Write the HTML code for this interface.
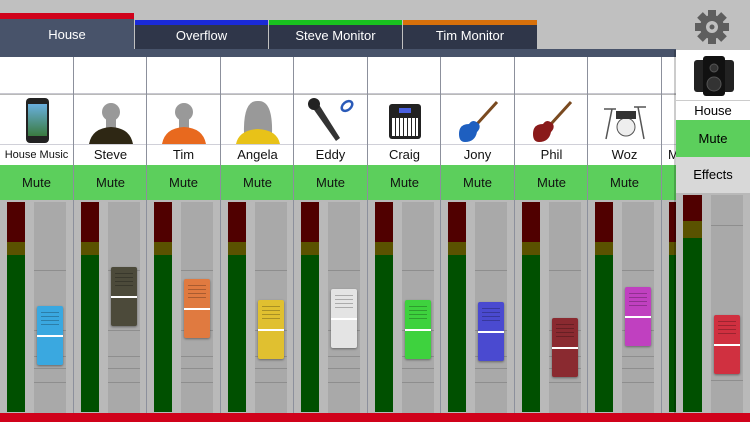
<!DOCTYPE html>
<html><head><meta charset="utf-8"><style>
*{margin:0;padding:0;box-sizing:border-box}
body{width:750px;height:422px;overflow:hidden;background:#c0c0c0;font-family:"Liberation Sans",sans-serif;position:relative}
.a{position:absolute}
.tab{position:absolute;top:20px;height:29px;color:#fff;font-size:13px;text-align:center;line-height:29px;background:#2f3649}
.ch{position:absolute;top:57px;width:74px;height:356px;border-right:1px solid #8c909c;background:#b9b9b9;overflow:hidden}
.w73{width:73px}
.r1{position:absolute;left:0;top:0;width:73px;height:37px;background:#fff;border-bottom:1px solid #c8c8d0}
.r2{position:absolute;left:0;top:38px;width:73px;height:50px;background:#fff;border-bottom:1px solid #d0d0d8}
.nm{position:absolute;left:0;top:88px;width:73px;height:20px;background:#fff;font-size:13px;text-align:center;line-height:20px;color:#111}
.mu{position:absolute;left:0;top:108px;width:73px;height:35px;background:#5ccf5c;font-size:13px;text-align:center;line-height:35px;color:#111}
.m1{position:absolute;left:7px;top:145px;width:18px;height:40px;background:#500000}
.m2{position:absolute;left:7px;top:185px;width:18px;height:13px;background:#5a5200}
.m3{position:absolute;left:7px;top:198px;width:18px;height:157px;background:#005000}
.gr{position:absolute;left:34px;top:145px;width:32px;height:211px;background:#a9a9a9}
.ln{position:absolute;left:34px;width:32px;height:1px;background:#8e8e8e}
.cap{position:absolute;left:37px;width:26px;height:59px;border-radius:2px;box-shadow:0 1px 2px rgba(0,0,0,.4)}
.cap:before{content:"";position:absolute;left:4px;right:4px;top:6px;height:14px;background:repeating-linear-gradient(rgba(0,0,0,.25) 0 1px,transparent 1px 4px)}
.cap:after{content:"";position:absolute;left:0;right:0;top:29px;height:2px;background:#fff}
</style></head><body>
<div class="a" style="left:0;top:13px;width:134px;height:7px;background:#d0021b"></div>
<div class="a" style="left:135px;top:20px;width:133px;height:5px;background:#1a2ad8"></div>
<div class="a" style="left:269px;top:20px;width:133px;height:5px;background:#19c21f"></div>
<div class="a" style="left:403px;top:20px;width:134px;height:5px;background:#d8700a"></div>
<div class="tab" style="left:0;top:19px;width:134px;height:31px;line-height:31px;background:#48536a">House</div>
<div class="tab" style="left:135px;top:25px;height:24px;line-height:22px;width:133px">Overflow</div>
<div class="tab" style="left:269px;top:25px;height:24px;line-height:22px;width:133px">Steve Monitor</div>
<div class="tab" style="left:403px;top:25px;height:24px;line-height:22px;width:134px">Tim Monitor</div>
<div class="a" style="left:0;top:49px;width:676px;height:8px;background:#48536a"></div>
<svg class="a" style="left:694px;top:9px" width="36" height="36" viewBox="-18 -18 36 36"><g fill="#5e5e5e"><circle r="12"/><rect x="-4" y="-17" width="8" height="34"/><rect x="-4" y="-17" width="8" height="34" transform="rotate(45)"/><rect x="-4" y="-17" width="8" height="34" transform="rotate(90)"/><rect x="-4" y="-17" width="8" height="34" transform="rotate(135)"/></g><circle r="6" fill="#c0c0c0"/><circle r="2.5" fill="#5e5e5e"/></svg>

<div class="ch" style="left:0"><div class="r1"></div><div class="r2"><div class="a" style="left:26px;top:3px;width:23px;height:45px;background:#222;border-radius:4px"><div class="a" style="left:2px;top:6px;width:19px;height:32px;background:linear-gradient(#6ab0e0,#3a7a40)"></div></div></div><div class="nm" style="font-size:11px">House Music</div><div class="mu">Mute</div><div class="m1"></div><div class="m2"></div><div class="m3"></div><div class="gr"></div><div class="ln" style="top:213px"></div><div class="ln" style="top:273px"></div><div class="ln" style="top:299px"></div><div class="ln" style="top:311px"></div><div class="ln" style="top:325px"></div><div class="cap" style="top:249px;background:#3aa8e0"></div></div>
<div class="ch w73" style="left:74px"><div class="r1"></div><div class="r2"><svg class="a" style="left:14px;top:3px" width="46" height="46"><circle cx="23" cy="14" r="9" fill="#999"/><rect x="18" y="20" width="10" height="10" fill="#999"/><path d="M1 46 Q4 30 23 29 Q42 30 45 46Z" fill="#2e2714"/></svg></div><div class="nm">Steve</div><div class="mu">Mute</div><div class="m1"></div><div class="m2"></div><div class="m3"></div><div class="gr"></div><div class="ln" style="top:213px"></div><div class="ln" style="top:273px"></div><div class="ln" style="top:299px"></div><div class="ln" style="top:311px"></div><div class="ln" style="top:325px"></div><div class="cap" style="top:210px;background:#4c4a3a"></div></div>
<div class="ch" style="left:147px"><div class="r1"></div><div class="r2"><svg class="a" style="left:14px;top:3px" width="46" height="46"><circle cx="23" cy="14" r="9" fill="#999"/><rect x="18" y="20" width="10" height="10" fill="#999"/><path d="M1 46 Q4 30 23 29 Q42 30 45 46Z" fill="#e8691e"/></svg></div><div class="nm">Tim</div><div class="mu">Mute</div><div class="m1"></div><div class="m2"></div><div class="m3"></div><div class="gr"></div><div class="ln" style="top:213px"></div><div class="ln" style="top:273px"></div><div class="ln" style="top:299px"></div><div class="ln" style="top:311px"></div><div class="ln" style="top:325px"></div><div class="cap" style="top:222px;background:#e07a40"></div></div>
<div class="ch w73" style="left:221px"><div class="r1"></div><div class="r2"><svg class="a" style="left:14px;top:3px" width="46" height="46"><path d="M9 36 Q8 2 23 3 Q38 2 37 36Z" fill="#999"/><path d="M1 46 Q4 32 23 31 Q42 32 45 46Z" fill="#e8c218"/></svg></div><div class="nm">Angela</div><div class="mu">Mute</div><div class="m1"></div><div class="m2"></div><div class="m3"></div><div class="gr"></div><div class="ln" style="top:213px"></div><div class="ln" style="top:273px"></div><div class="ln" style="top:299px"></div><div class="ln" style="top:311px"></div><div class="ln" style="top:325px"></div><div class="cap" style="top:243px;background:#e0c030"></div></div>
<div class="ch" style="left:294px"><div class="r1"></div><div class="r2"><svg class="a" style="left:12px;top:2px" width="50" height="48"><path d="M6 10 L30 44 L34 41 L12 6Z" fill="#333"/><circle cx="8" cy="7" r="6" fill="#222"/><ellipse cx="41" cy="9" rx="6" ry="4" fill="none" stroke="#2a5ab8" stroke-width="2.5" transform="rotate(-40 41 9)"/></svg></div><div class="nm">Eddy</div><div class="mu">Mute</div><div class="m1"></div><div class="m2"></div><div class="m3"></div><div class="gr"></div><div class="ln" style="top:213px"></div><div class="ln" style="top:273px"></div><div class="ln" style="top:299px"></div><div class="ln" style="top:311px"></div><div class="ln" style="top:325px"></div><div class="cap" style="top:232px;background:#e4e4e4"></div></div>
<div class="ch w73" style="left:368px"><div class="r1"></div><div class="r2"><div class="a" style="left:21px;top:9px;width:32px;height:35px;background:#222;border-radius:3px"><div class="a" style="left:10px;top:4px;width:12px;height:5px;background:#4a60e0"></div><div class="a" style="left:3px;top:14px;width:26px;height:18px;background:repeating-linear-gradient(90deg,#fff 0 3px,#222 3px 4px)"></div></div></div><div class="nm">Craig</div><div class="mu">Mute</div><div class="m1"></div><div class="m2"></div><div class="m3"></div><div class="gr"></div><div class="ln" style="top:213px"></div><div class="ln" style="top:273px"></div><div class="ln" style="top:299px"></div><div class="ln" style="top:311px"></div><div class="ln" style="top:325px"></div><div class="cap" style="top:243px;background:#3ed23e"></div></div>
<div class="ch" style="left:441px"><div class="r1"></div><div class="r2"><svg class="a" style="left:14px;top:3px" width="46" height="46"><path d="M22 26 L42 4" stroke="#7a4a20" stroke-width="3"/><path d="M4 36 Q4 26 14 26 Q18 20 24 26 Q26 30 22 34 Q20 44 10 44 Q4 44 4 36Z" fill="#1e5fc0"/></svg></div><div class="nm">Jony</div><div class="mu">Mute</div><div class="m1"></div><div class="m2"></div><div class="m3"></div><div class="gr"></div><div class="ln" style="top:213px"></div><div class="ln" style="top:273px"></div><div class="ln" style="top:299px"></div><div class="ln" style="top:311px"></div><div class="ln" style="top:325px"></div><div class="cap" style="top:245px;background:#4a4ad0"></div></div>
<div class="ch w73" style="left:515px"><div class="r1"></div><div class="r2"><svg class="a" style="left:14px;top:3px" width="46" height="46"><path d="M22 26 L42 4" stroke="#7a4a20" stroke-width="3"/><path d="M4 36 Q4 26 14 26 Q18 20 24 26 Q26 30 22 34 Q20 44 10 44 Q4 44 4 36Z" fill="#8a1a1a"/></svg></div><div class="nm">Phil</div><div class="mu">Mute</div><div class="m1"></div><div class="m2"></div><div class="m3"></div><div class="gr"></div><div class="ln" style="top:213px"></div><div class="ln" style="top:273px"></div><div class="ln" style="top:299px"></div><div class="ln" style="top:311px"></div><div class="ln" style="top:325px"></div><div class="cap" style="top:261px;background:#8a2a30"></div></div>
<div class="ch" style="left:588px"><div class="r1"></div><div class="r2"><svg class="a" style="left:14px;top:6px" width="46" height="40"><circle cx="24" cy="26" r="9" fill="#eee" stroke="#555"/><rect x="14" y="10" width="20" height="8" fill="#333"/><path d="M4 38 L10 8 M42 38 L36 6 M2 8 H14 M32 6 H44" stroke="#555" stroke-width="1.5"/></svg></div><div class="nm">Woz</div><div class="mu">Mute</div><div class="m1"></div><div class="m2"></div><div class="m3"></div><div class="gr"></div><div class="ln" style="top:213px"></div><div class="ln" style="top:273px"></div><div class="ln" style="top:299px"></div><div class="ln" style="top:311px"></div><div class="ln" style="top:325px"></div><div class="cap" style="top:230px;background:#c040c0"></div></div>
<div class="ch" style="left:662px;width:15px;border-right:none"><div class="r1" style="width:15px"></div><div class="r2" style="width:15px"></div><div class="nm" style="width:15px;text-align:left;padding-left:6px;overflow:hidden">M</div><div class="mu" style="width:15px"></div><div class="m1"></div><div class="m2"></div><div class="m3"></div></div>

<div class="a" style="left:674px;top:50px;width:3px;height:363px;background:rgba(0,0,0,.2)"></div>
<div class="a" style="left:676px;top:50px;width:74px;height:363px;background:#b9b9b9">
<div class="a" style="left:0;top:0;width:74px;height:50px;background:#fff"><svg class="a" style="left:16px;top:4px" width="44" height="44"><rect x="2" y="6" width="14" height="32" rx="3" fill="#222"/><rect x="28" y="6" width="14" height="32" rx="3" fill="#222"/><rect x="11" y="2" width="22" height="40" rx="3" fill="#111"/><circle cx="22" cy="30" r="7" fill="#333" stroke="#555"/><circle cx="22" cy="14" r="4" fill="#333" stroke="#555"/></svg></div>
<div class="a" style="left:0;top:50px;width:74px;height:20px;background:#fff;border-top:1px solid #ccc;font-size:13px;text-align:center;line-height:19px">House</div>
<div class="a" style="left:0;top:70px;width:74px;height:37px;background:#5ccf5c;font-size:13px;text-align:center;line-height:37px">Mute</div>
<div class="a" style="left:0;top:107px;width:74px;height:36px;background:#d8d8d8;font-size:13px;text-align:center;line-height:36px">Effects</div>
<div class="a" style="left:7px;top:145px;width:19px;height:26px;background:#500000"></div>
<div class="a" style="left:7px;top:171px;width:19px;height:17px;background:#5a5200"></div>
<div class="a" style="left:7px;top:188px;width:19px;height:174px;background:#005000"></div>
<div class="a" style="left:35px;top:145px;width:32px;height:218px;background:#a9a9a9"></div>
<div class="a" style="left:35px;top:175px;width:32px;height:1px;background:#8e8e8e"></div>
<div class="a" style="left:35px;top:330px;width:32px;height:1px;background:#8e8e8e"></div>
<div class="cap" style="left:38px;top:265px;background:#d03040"></div>
</div>
<div class="a" style="left:0;top:413px;width:750px;height:9px;background:#d0021b"></div>
</body></html>
